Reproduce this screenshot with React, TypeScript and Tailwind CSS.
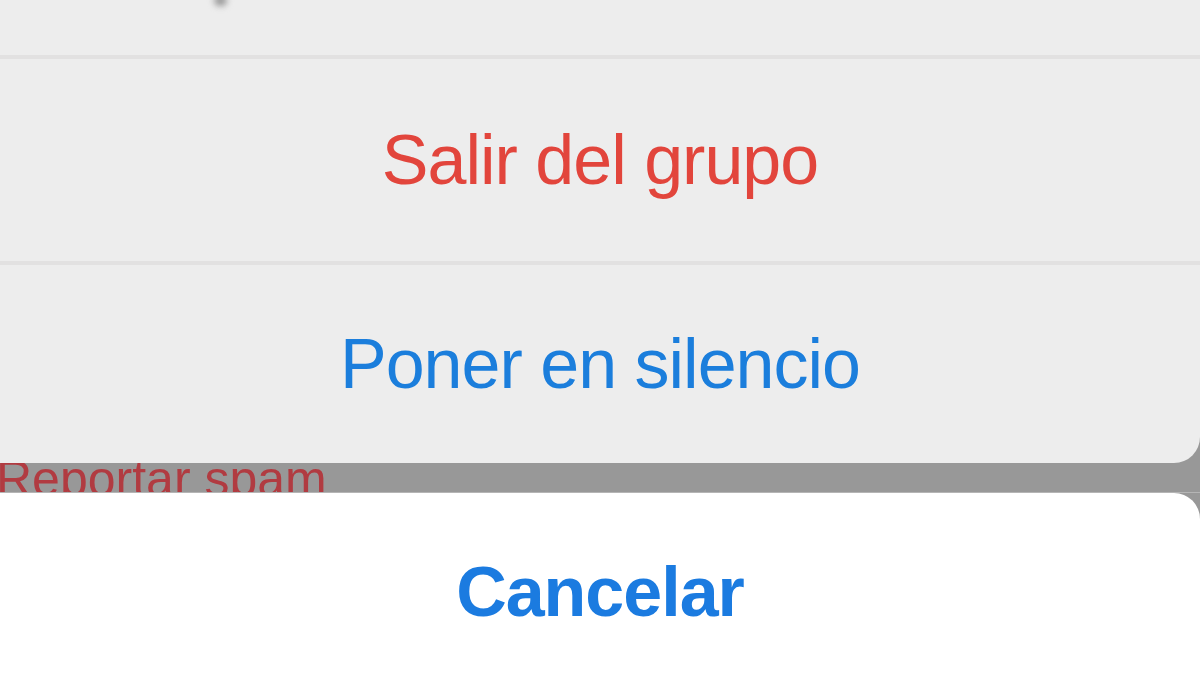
import React from 'react';

type SheetAction = {
  label: string;
  tone: 'danger' | 'primary';
};

const ACTIONS: SheetAction[] = [
  { label: 'Salir del grupo', tone: 'danger' },
  { label: 'Poner en silencio', tone: 'primary' },
];

const FONT = { fontFamily: '"Liberation Sans", Arial, sans-serif' };

function Divider() {
  return <div className="h-[4px] w-full bg-[#e2e1e1]" />;
}

function ActionRow({ action, height }: { action: SheetAction; height: string }) {
  const color = action.tone === 'danger' ? 'text-[#e2453c]' : 'text-[#1b7edc]';
  return (
    <button className={`flex w-full items-center justify-center ${height}`}>
      <span className={`text-[70px] leading-none tracking-[-1px] ${color}`}>{action.label}</span>
    </button>
  );
}

export default function App() {
  return (
    <div className="flex h-[675px] w-[1200px] flex-col overflow-hidden bg-[#989898]" style={FONT}>
      {/* action group */}
      <div className="relative flex h-[463px] shrink-0 flex-col rounded-br-[26px] bg-[#ededed]">
        {/* tail of the row above, scrolled out of view */}
        <div className="relative h-[55px] shrink-0">
          <div className="absolute left-[214px] top-[-5px] h-[11px] w-[13px] rounded-full bg-[#9a9a9a] blur-[3px]" />
        </div>
        <Divider />
        <ActionRow action={ACTIONS[0]} height="h-[202px]" />
        <Divider />
        <ActionRow action={ACTIONS[1]} height="flex-1" />
      </div>

      {/* gap with the text behind the sheet */}
      <div className="h-[30px] shrink-0 overflow-hidden border-b border-[#b5b5b5]">
        <p className="ml-[-4px] mt-[-9px] whitespace-nowrap text-[50px] leading-none text-[#b13b41]">Reportar spam</p>
      </div>

      {/* cancel */}
      <div className="flex flex-1 items-start justify-center rounded-tr-[26px] bg-white pt-[64px]">
        <button className="text-[70px] font-bold leading-none tracking-[-1px] text-[#1b7be0]">Cancelar</button>
      </div>
    </div>
  );
}
